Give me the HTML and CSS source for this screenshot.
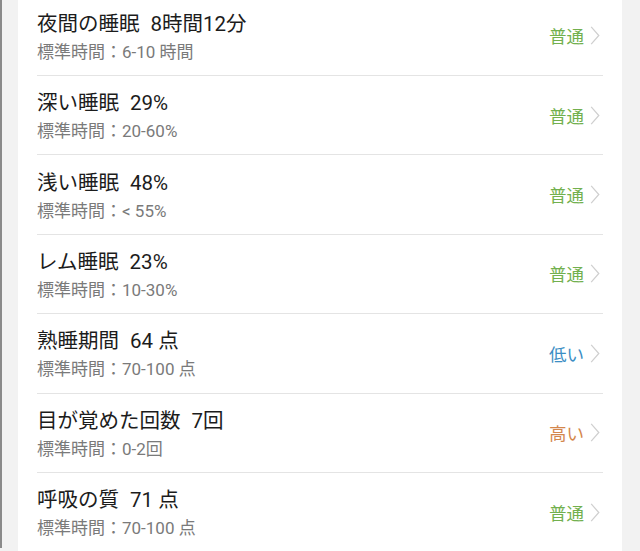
FILE: index.html
```html
<!DOCTYPE html>
<html lang="ja">
<head>
<meta charset="utf-8">
<link rel="stylesheet" href="styles.css">
</head>
<body>
<div class="page">
  <div class="card">
    <div class="row">
      <div class="info">
        <div class="title">夜間の睡眠<span class="val">8時間12分</span></div>
        <div class="sub">標準時間：6-10 時間</div>
      </div>
      <div class="status normal">普通<svg class="chev" viewBox="0 0 10 20"><path d="M1 1 L9 10 L1 19" /></svg></div>
    </div>
    <div class="row">
      <div class="info">
        <div class="title">深い睡眠<span class="val">29%</span></div>
        <div class="sub">標準時間：20-60%</div>
      </div>
      <div class="status normal">普通<svg class="chev" viewBox="0 0 10 20"><path d="M1 1 L9 10 L1 19" /></svg></div>
    </div>
    <div class="row">
      <div class="info">
        <div class="title">浅い睡眠<span class="val">48%</span></div>
        <div class="sub">標準時間：&lt; 55%</div>
      </div>
      <div class="status normal">普通<svg class="chev" viewBox="0 0 10 20"><path d="M1 1 L9 10 L1 19" /></svg></div>
    </div>
    <div class="row">
      <div class="info">
        <div class="title">レム睡眠<span class="val">23%</span></div>
        <div class="sub">標準時間：10-30%</div>
      </div>
      <div class="status normal">普通<svg class="chev" viewBox="0 0 10 20"><path d="M1 1 L9 10 L1 19" /></svg></div>
    </div>
    <div class="row">
      <div class="info">
        <div class="title">熟睡期間<span class="val">64 点</span></div>
        <div class="sub">標準時間：70-100 点</div>
      </div>
      <div class="status low">低い<svg class="chev" viewBox="0 0 10 20"><path d="M1 1 L9 10 L1 19" /></svg></div>
    </div>
    <div class="row">
      <div class="info">
        <div class="title">目が覚めた回数<span class="val">7回</span></div>
        <div class="sub">標準時間：0-2回</div>
      </div>
      <div class="status high">高い<svg class="chev" viewBox="0 0 10 20"><path d="M1 1 L9 10 L1 19" /></svg></div>
    </div>
    <div class="row last">
      <div class="info">
        <div class="title">呼吸の質<span class="val">71 点</span></div>
        <div class="sub">標準時間：70-100 点</div>
      </div>
      <div class="status normal">普通<svg class="chev" viewBox="0 0 10 20"><path d="M1 1 L9 10 L1 19" /></svg></div>
    </div>
  </div>
</div>
</body>
</html>
```
FILE: styles.css
```css
html, body {
  margin: 0;
  padding: 0;
  height: 100%;
  overflow: hidden;
}
body {
  background: #f2f2f2;
  font-family: Roboto, "Noto Sans CJK JP", sans-serif;
}
.page {
  border-left: 2px solid #8a8a8a;
  height: 100%;
  box-sizing: border-box;
  padding-left: 16px;
}
.card {
  width: 604px;
  background: #fff;
  margin-top: -3.4px;
  height: calc(100% + 3.4px);
  overflow: hidden;
}
.row {
  margin: 0 19px;
  height: 78.4px;
  border-bottom: 1px solid #e4e4e4;
  display: flex;
  align-items: center;
}
.row.last {
  border-bottom: none;
}
.info {
  flex: 1;
  padding-top: 2px;
}
.title {
  font-size: 20.5px;
  line-height: 26px;
  color: #1c1c1c;
}
.val {
  margin-left: 11px;
}
.sub {
  margin-top: 5px;
  font-size: 17px;
  line-height: 21px;
  color: #7a7a7a;
}
.status {
  display: flex;
  align-items: center;
  font-size: 17.5px;
  margin-right: 3px;
}
.normal { color: #72b04e; }
.low { color: #3c8ec4; }
.high { color: #d4874c; }
.chev {
  width: 10px;
  height: 19px;
  margin-left: 6px;
  fill: none;
  stroke: #cfcfcf;
  stroke-width: 1.3;
}
```
